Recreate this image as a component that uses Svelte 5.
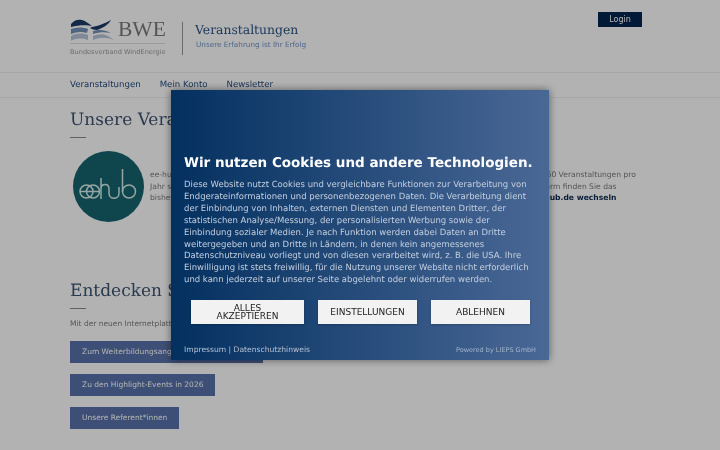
<script>
  const nav = ["Veranstaltungen", "Mein Konto", "Newsletter"];
  const actions = ["Zum Weiterbildungsangebot des BWE für Sie", "Zu den Highlight-Events in 2026", "Unsere Referent*innen"];
  const buttons = ["ALLES AKZEPTIEREN", "EINSTELLUNGEN", "ABLEHNEN"];
</script>

<div class="page">
  <header class="top">
    <div class="brand">
      <div class="logo">
        <div class="logo-row">
          <svg width="45" height="23" viewBox="0 0 45 23">
            <path d="M1 6C4 2 8 1 12 2C16 3 19 6 22 8C17 7 8 7 1 9Z" fill="#1e3a68"/>
            <path d="M22 9C28 8 36 5 41 2C38 7 33 10 27 12C24 12 22 11 20 10Z" fill="#1e3a68"/>
            <path d="M1 11C7 9 13 9 18 11L17 15C11 13 6 14 1 16Z" fill="#7590b8"/>
            <path d="M23 13C29 11 35 12 41 15C35 14 29 14 23 16Z" fill="#7590b8"/>
            <path d="M1 18C7 15 12 15 18 17L18 22C12 20 6 20 1 23Z" fill="#b8c4d8"/>
            <path d="M23 18C30 15 37 16 44 22C37 19 30 19 23 22Z" fill="#b8c4d8"/>
          </svg>
          <span class="bwe">BWE</span>
        </div>
        <div class="assoc">Bundesverband WindEnergie</div>
      </div>
      <div class="titles">
        <div class="title">Veranstaltungen</div>
        <div class="sub">Unsere Erfahrung ist Ihr Erfolg</div>
      </div>
    </div>
    <button class="login">Login</button>
  </header>

  <nav class="menu">
    {#each nav as item}
      <span>{item}</span>
    {/each}
  </nav>

  <main class="content">
    <h2>Unsere Veranstaltungsplattform</h2>
    <div class="rule"></div>
    <section class="hub">
      <div class="hub-logo">
        <svg width="71" height="71" viewBox="0 0 71 71" fill="none" stroke="#d5ece8" stroke-width="1.5">
          <circle cx="13.5" cy="40.5" r="6.5"/>
          <circle cx="20" cy="40.5" r="6.5"/>
          <path d="M7 40.5H26.5"/>
          <path d="M28 27V48M28 38C28 32 36 32 36 38V42C36 49 46 49 46 42V36"/>
          <path d="M49.500 18V41"/>
          <circle cx="56" cy="40.500" r="6.500"/>
        </svg>
      </div>
      <p>
        ee-hub ist unsere neue Plattform für die gesamte Energiewende in ganz Deutschland mit jährlich über 160 Veranstaltungen pro<br />
        Jahr sowie vielen weiteren Angeboten und aktuellen Informationen. Auf unserer neuen Online-Lernplattform finden Sie das<br />
        bisherige Angebot des BWE und noch sehr vieles mehr. Klicken Sie einfach hier, um direkt <b>zu www.ee-hub.de wechseln</b>
      </p>
    </section>

    <h2 class="second">Entdecken Sie unser Angebot</h2>
    <div class="rule"></div>
    <p class="intro">Mit der neuen Internetplattform bieten wir Ihnen alle Informationen.</p>
    <div class="actions">
      {#each actions as label}
        <a href="#top">{label}</a>
      {/each}
    </div>
  </main>
</div>

<div class="backdrop">
  <div class="dialog">
    <h1>Wir nutzen Cookies und andere Technologien.</h1>
    <p>Diese Website nutzt Cookies und vergleichbare Funktionen zur Verarbeitung von Endgerateinformationen und personenbezogenen Daten. Die Verarbeitung dient der Einbindung von Inhalten, externen Diensten und Elementen Dritter, der statistischen Analyse/Messung, der personalisierten Werbung sowie der Einbindung sozialer Medien. Je nach Funktion werden dabei Daten an Dritte weitergegeben und an Dritte in Ländern, in denen kein angemessenes Datenschutzniveau vorliegt und von diesen verarbeitet wird, z. B. die USA. Ihre Einwilligung ist stets freiwillig, für die Nutzung unserer Website nicht erforderlich und kann jederzeit auf unserer Seite abgelehnt oder widerrufen werden.</p>
    <div class="choices">
      {#each buttons as label}
        <button>{label}</button>
      {/each}
    </div>
    <footer>
      <span class="links">Impressum | Datenschutzhinweis</span>
      <span class="powered">Powered by LIEPS GmbH</span>
    </footer>
  </div>
</div>

<style>
  :global(body) {
    margin: 0;
    background: #fff;
    font-family: "DejaVu Sans", sans-serif;
    text-rendering: geometricPrecision;
    overflow: hidden;
  }
  .page {
    height: 450px;
    overflow: hidden;
    filter: blur(0.45px);
  }
  .top {
    height: 73px;
    box-sizing: border-box;
    padding: 12px 78px 0 70px;
    display: flex;
    justify-content: space-between;
    align-items: flex-start;
    border-bottom: 1px solid #eee;
  }
  .brand {
    display: flex;
    padding-top: 5px;
  }
  .logo {
    width: 95px;
    padding-right: 17px;
    flex: none;
  }
  .logo-row {
    display: flex;
    align-items: center;
    gap: 3px;
    height: 24px;
    border-bottom: 1px solid #ddd;
    padding-bottom: 2px;
  }
  .logo-row svg {
    flex: none;
  }
  .bwe {
    font: 21.500px "Liberation Serif", serif;
    color: #7a7a7a;
  }
  .assoc {
    font-size: 6.600px;
    color: #9c9c9c;
    margin-top: 4px;
    white-space: nowrap;
  }
  .titles {
    border-left: 1px solid #999;
    height: 33px;
    margin-top: 5px;
    padding-left: 12px;
  }
  .title {
    font: 12.400px "DejaVu Serif", serif;
    color: #2c5488;
  }
  .sub {
    font-size: 7.250px;
    color: #6f93c4;
    margin-top: 3px;
    padding-left: 1px;
  }
  .login {
    width: 44px;
    height: 15px;
    border: 0;
    padding: 0;
    background: #04264f;
    color: #fff;
    font: 8px "DejaVu Sans", sans-serif;
  }
  .menu {
    height: 25px;
    padding-left: 70px;
    display: flex;
    align-items: center;
    gap: 19px;
    border-bottom: 1px solid #eee;
    font-size: 8.600px;
    color: #264c80;
    box-sizing: border-box;
  }
  .content {
    padding: 12px 0 0 70px;
  }
  h2 {
    margin: 0;
    font: 400 17px/20px "DejaVu Serif", serif;
    color: #3c5270;
    white-space: nowrap;
  }
  .rule {
    width: 16px;
    height: 1px;
    background: #8a8a8a;
    margin-top: 7px;
  }
  .hub {
    display: flex;
    margin-top: 13px;
    height: 130px;
  }
  .hub-logo {
    width: 71px;
    height: 71px;
    margin-left: 3px;
    border-radius: 50%;
    background: #166570;
    flex: none;
  }
  .hub-logo svg {
    display: block;
  }
  .hub p {
    margin: 18px 0 0 6px;
    font-size: 7.600px;
    line-height: 11.500px;
    color: #7a7a7a;
    white-space: nowrap;
  }
  .hub b {
    color: #0a2a52;
  }
  .intro {
    margin: 10px 0 0;
    font-size: 7.500px;
    color: #7a7a7a;
  }
  .actions {
    margin-top: 13px;
    display: flex;
    flex-direction: column;
    align-items: flex-start;
    gap: 11px;
  }
  .actions a {
    height: 22px;
    line-height: 22px;
    padding: 0 12px;
    background: #5872ab;
    color: #fff;
    font-size: 7.500px;
    text-decoration: none;
    white-space: nowrap;
  }
  .backdrop {
    position: fixed;
    inset: 0;
    background: rgba(0, 0, 0, 0.3);
  }
  .dialog {
    margin: 90px 0 0 171px;
    width: 378px;
    height: 270px;
    box-sizing: border-box;
    padding: 64px 13px 6px;
    background: linear-gradient(90deg, #03305f 0%, #4a6896 100%);
    box-shadow: 0 0 8px rgba(0, 0, 0, 0.5);
    color: #fff;
    display: flex;
    flex-direction: column;
    filter: blur(0.3px);
  }
  h1 {
    margin: 0;
    font-size: 13.500px;
    line-height: 18px;
    font-weight: 700;
    white-space: nowrap;
  }
  .dialog p {
    margin: 8px 0 0;
    font-size: 8.500px;
    line-height: 11.900px;
    color: #c3cede;
  }
  .choices {
    margin-top: 13px;
    display: flex;
    justify-content: space-between;
    padding: 0 6px 0 7px;
  }
  .choices button {
    width: 113px;
    height: 24px;
    border: 0;
    padding: 0 12px;
    background: #f2f2f2;
    color: #222;
    font: 9px/8.500px "DejaVu Sans", sans-serif;
    box-shadow: 0 1px 2px rgba(0, 0, 0, 0.2);
  }
  .choices button:nth-child(2) {
    width: 99px;
    padding: 0;
  }
  .choices button:nth-child(3) {
    width: 99px;
  }
  footer {
    margin-top: auto;
    display: flex;
    justify-content: space-between;
    align-items: center;
  }
  .links {
    font-size: 7.600px;
    color: #b4c1d4;
  }
  .powered {
    font-size: 6.500px;
    color: #a4b3ca;
  }
</style>
